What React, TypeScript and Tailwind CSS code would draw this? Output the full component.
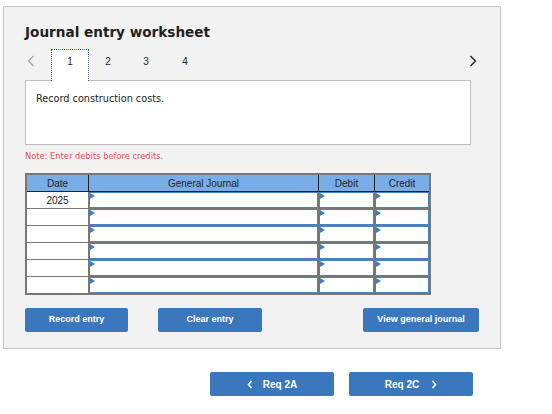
import React from 'react';

const rows = ['2025', '', '', '', '', ''];

function Arrow() {
  return (
    <span className="absolute left-0 top-0 w-0 h-0 border-t-[3px] border-b-[3px] border-l-[5px] border-t-transparent border-b-transparent border-l-[#3f7cc4]" />
  );
}

function InputCell({ w }: { w: string }) {
  return (
    <div className={`${w} h-full border-l border-[#777]`}>
      <div className="relative h-full w-full bg-white border border-[#4a7fc0]">
        <Arrow />
      </div>
    </div>
  );
}

export default function App() {
  return (
    <div className="w-[552px] h-[414px] bg-white font-['DejaVu_Sans',sans-serif] text-[#222] pt-[6px] pl-[3px]">
      <div className="w-[498px] h-[343px] bg-[#f2f2f2] border border-[#c6c6c6] pl-[21px] pt-[16px]">
        <h2 className="text-[13.6px] font-bold leading-[18px] text-[#1f1f1f]">Journal entry worksheet</h2>

        <div className="mt-[8px] w-[455px] h-[32px] flex items-start">
          <span className="w-[26px] pl-[2px] pt-[6px]">
            <svg width="8" height="12" viewBox="0 0 8 12"><path d="M6.5 1 L1.5 6 L6.5 11" fill="none" stroke="#a8a8a8" strokeWidth="1.4" /></svg>
          </span>
          <div className="flex h-full text-[10px] leading-[12px] font-['Liberation_Sans',sans-serif]">
            <div className="w-[38px] h-[32px] bg-white border border-b-0 border-dotted border-[#3a5f9a] flex justify-center pt-[6px]">1</div>
            <div className="w-[38px] flex justify-center pt-[7px]">2</div>
            <div className="w-[38px] flex justify-center pt-[7px]">3</div>
            <div className="w-[40px] flex justify-center pt-[7px]">4</div>
          </div>
          <span className="ml-auto mr-[3px] pt-[6px]">
            <svg width="8" height="12" viewBox="0 0 8 12"><path d="M1.5 1 L6.5 6 L1.5 11" fill="none" stroke="#222" strokeWidth="1.4" /></svg>
          </span>
        </div>

        <div className="-mt-[1px] w-[446px] h-[65px] bg-white border border-[#bdbdbd] pl-[10px] pt-[11px] text-[9.7px]">
          Record construction costs.
        </div>

        <p className="mt-[6px] text-[8.3px] leading-[10px] text-[#d9534f]">Note: Enter debits before credits.</p>

        <div className="mt-[12px] w-[406px] border-2 border-[#777] font-['Liberation_Sans',sans-serif] text-[10px]">
          <div className="flex h-[17px] bg-[#79ade6] border-b border-[#222] text-[#222]">
            <div className="w-[61px] flex items-center justify-center">Date</div>
            <div className="w-[230px] border-l border-[#222] flex items-center justify-center">General Journal</div>
            <div className="w-[56px] border-l border-[#222] flex items-center justify-center">Debit</div>
            <div className="flex-1 border-l border-[#222] flex items-center justify-center">Credit</div>
          </div>
          {rows.map((d, i) => (
            <div key={i} className={`flex bg-white ${i > 0 ? 'h-[17px] border-t border-[#777]' : 'h-[16px]'}`}>
              <div className="w-[61px] flex items-center justify-center text-[#222]">{d}</div>
              <InputCell w="w-[230px]" />
              <InputCell w="w-[56px]" />
              <InputCell w="flex-1" />
            </div>
          ))}
        </div>

        <div className="mt-[13px] w-[454px] flex text-white font-['Liberation_Sans',sans-serif] font-bold text-[9px]">
          <button className="w-[103px] h-[24px] bg-[#3b77bc] rounded-[2px]">Record entry</button>
          <button className="ml-[30px] w-[104px] h-[24px] bg-[#3b77bc] rounded-[2px]">Clear entry</button>
          <button className="ml-auto w-[116px] h-[24px] bg-[#3b77bc] rounded-[2px]">View general journal</button>
        </div>
      </div>

      <div className="mt-[23px] flex text-white font-['Liberation_Sans',sans-serif] font-bold text-[10px]">
        <button className="ml-[207px] w-[124px] h-[24px] bg-[#3b77bc] rounded-[2px] flex items-center justify-center gap-[10px]">
          <svg width="6" height="9" viewBox="0 0 6 9"><path d="M4.5 1 L1.5 4.5 L4.5 8" fill="none" stroke="#fff" strokeWidth="1.6" /></svg>
          <span>Req 2A</span>
        </button>
        <button className="ml-[15px] w-[124px] h-[24px] bg-[#3b77bc] rounded-[2px] flex items-center justify-center gap-[12px]">
          <span>Req 2C</span>
          <svg width="6" height="9" viewBox="0 0 6 9"><path d="M1.5 1 L4.5 4.5 L1.5 8" fill="none" stroke="#fff" strokeWidth="1.6" /></svg>
        </button>
      </div>
    </div>
  );
}
